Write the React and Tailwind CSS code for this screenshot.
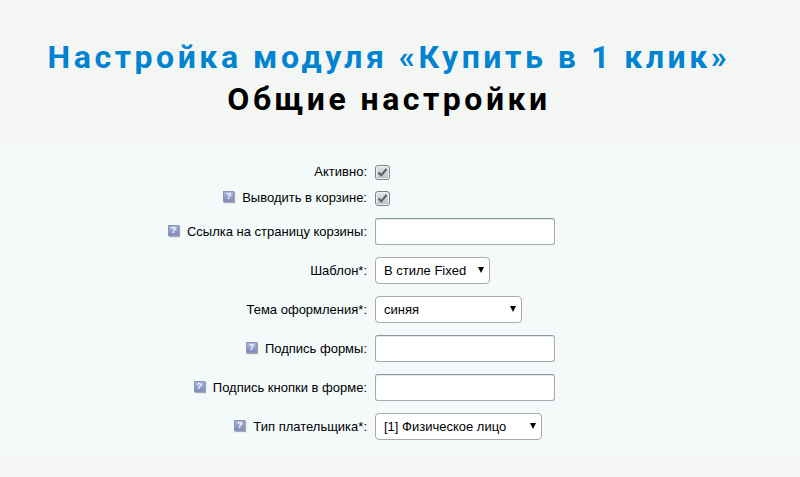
const Help = () => (
  <span className="w-[11px] h-[11px] mr-2 mb-[3px] flex items-center justify-center bg-gradient-to-b from-[#aab4e0] to-[#7f8bba] border border-[#8a93b8] text-white text-[9px] leading-none font-bold shadow-[1px_1px_1px_#a4a9b0]">?</span>
);

const Check = () => (
  <span className="w-[15px] h-[15px] rounded-[3px] border border-[#7f858a] bg-gradient-to-b from-[#e2e4e6] to-[#bcc0c4] shadow-[inset_0_0_0_1px_#eef0f1] flex items-center justify-center">
    <svg width="11" height="11" viewBox="0 0 11 11" fill="none" stroke="#5a5f64" strokeWidth="2"><path d="M1.5 5.5 L4.3 8.3 L9.5 2" /></svg>
  </span>
);

const Input = () => (
  <input className="w-[180px] h-[27px] bg-white rounded-[3px] border border-[#a3abb2] border-t-[#8d969e] shadow-[inset_0_1px_1px_#e3e6e8] outline-none" />
);

const Sel = ({ w, text }) => (
  <span className="relative block" style={{ width: w }}>
    <select className="block w-full h-[27px] pl-2 bg-white rounded-[4px] border border-[#a9a9a9] text-[13px] text-black appearance-none outline-none">
      <option>{text}</option>
    </select>
    <svg className="absolute top-[10px] right-[6px]" width="6" height="6" viewBox="0 0 6 6"><path d="M0 0 H6 L3 6 Z" fill="#000" /></svg>
  </span>
);

const Row = ({ h, label, help, children }) => (
  <div className="flex items-center" style={{ height: h }}>
    <div className="w-[367px] flex items-center justify-end text-[13px] text-black">
      {help && <Help />}
      <span>{label}</span>
    </div>
    <div className="ml-2 flex items-center">{children}</div>
  </div>
);

export default function App() {
  return (
    <div className="w-[800px] h-[477px] overflow-hidden bg-[#f4f6f4] font-['Liberation_Sans',Arial,sans-serif]">
      <div className="h-[143px] pt-[38px] pr-[22px] flex flex-col items-center font-['Roboto',sans-serif]">
        <div className="text-[32px] leading-[39px] font-bold tracking-[3.55px] text-[#0083d1] whitespace-nowrap">Настройка модуля «Купить в 1 клик»</div>
        <div className="text-[32px] leading-[44px] font-bold tracking-[3.5px] text-black whitespace-nowrap">Общие настройки</div>
      </div>
      <div className="h-[313px] pt-4 bg-[#f4fafa]">
        <Row h={26} label="Активно:"><Check /></Row>
        <Row h={26} label="Выводить в корзине:" help><Check /></Row>
        <Row h={41} label="Ссылка на страницу корзины:" help><Input /></Row>
        <Row h={37} label="Шаблон*:"><Sel w={115} text="В стиле Fixed" /></Row>
        <Row h={41} label="Тема оформления*:"><Sel w={147} text="синяя" /></Row>
        <Row h={37} label="Подпись формы:" help><Input /></Row>
        <Row h={41} label="Подпись кнопки в форме:" help><Input /></Row>
        <Row h={37} label="Тип плательщика*:" help><Sel w={167} text="[1] Физическое лицо" /></Row>
      </div>
    </div>
  );
}
